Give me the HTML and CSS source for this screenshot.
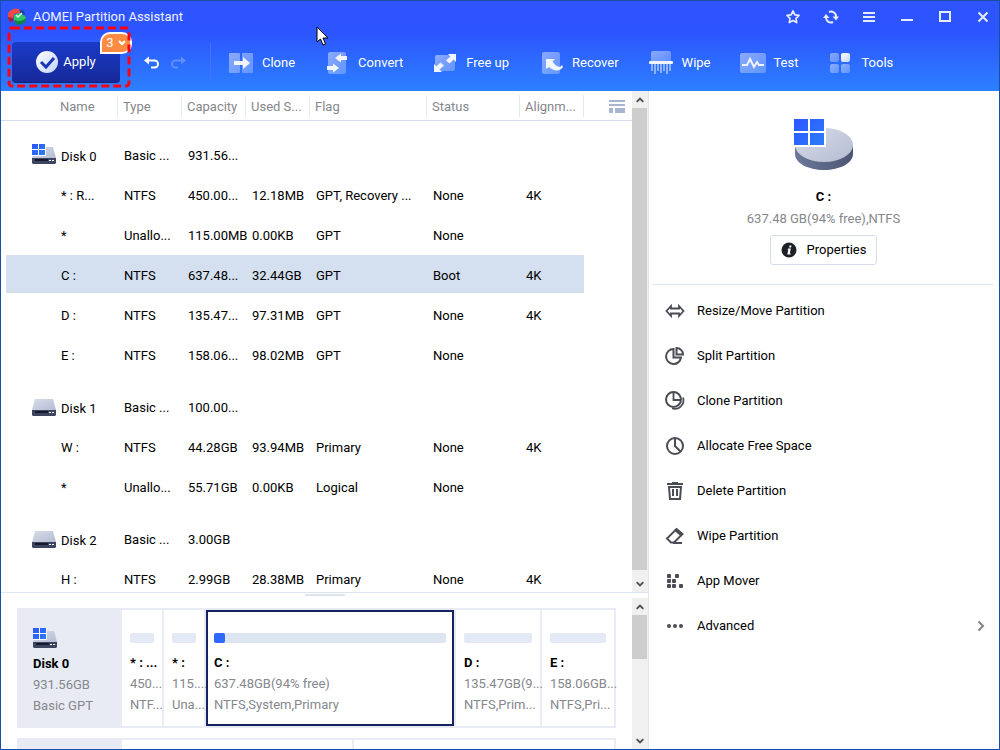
FILE: index.html
```
<!DOCTYPE html>
<html lang="en">
<head>
    <meta charset="UTF-8">
    <meta name="viewport" content="width=device-width, initial-scale=1.0">
    <title>AOMEI Partition Assistant</title>
    <link rel="stylesheet" href="styles.css">
</head>
<body>
    <!-- shared icons -->
    <svg class="defs" width="0" height="0" aria-hidden="true">
        <defs>
            <linearGradient id="tile" x1="0" y1="0" x2="1" y2="1">
                <stop offset="0" stop-color="#fff" stop-opacity=".45"/>
                <stop offset="1" stop-color="#fff" stop-opacity=".25"/>
            </linearGradient>
            <linearGradient id="shine" x1="0" y1="0" x2="1" y2="1">
                <stop offset="0" stop-color="#fff"/>
                <stop offset="1" stop-color="#c3d3fb"/>
            </linearGradient>
            <linearGradient id="metal" x1="0" y1="0" x2="1" y2="1">
                <stop offset="0" stop-color="#d9dde9"/>
                <stop offset="1" stop-color="#b4bcd2"/>
            </linearGradient>
            <linearGradient id="rim" x1="0" y1="0" x2="1" y2="0">
                <stop offset="0" stop-color="#6c7899"/>
                <stop offset="1" stop-color="#4c5674"/>
            </linearGradient>
            <linearGradient id="win" gradientUnits="userSpaceOnUse" x1="0" y1="0" x2="30" y2="26">
                <stop offset="0" stop-color="#2e55ff"/>
                <stop offset="1" stop-color="#2b7dfb"/>
            </linearGradient>
            <linearGradient id="winSmall" gradientUnits="userSpaceOnUse" x1="0" y1="0" x2="13" y2="11">
                <stop offset="0" stop-color="#2e55ff"/>
                <stop offset="1" stop-color="#2b7dfb"/>
            </linearGradient>
        </defs>
        <symbol id="disk" viewBox="0 0 24 20">
            <path d="M3 3h18l3 11H0z" fill="url(#metal)"/>
            <path d="M0 14h24v5l-1 1H1l-1-1z" fill="#3d4560"/>
            <path d="M3 15h13v2H3z" fill="#141a2c"/>
            <path d="M17 16h2v1h-2zM20 16h2v1h-2z" fill="#fff"/>
        </symbol>
        <symbol id="disk-system" viewBox="0 0 24 20">
            <path d="M3 3h18l3 11H0z" fill="url(#metal)"/>
            <path d="M0 14h24v5l-1 1H1l-1-1z" fill="#3d4560"/>
            <path d="M3 15h13v2H3z" fill="#141a2c"/>
            <path d="M17 16h2v1h-2zM20 16h2v1h-2z" fill="#fff"/>
            <path d="M0 0h14v12H0z" fill="#fff"/>
            <path d="M0 0h6v5H0zM7 0h6v5H7zM0 6h6v5H0zM7 6h6v5H7z" fill="url(#winSmall)"/>
        </symbol>
        <symbol id="arrow-up" viewBox="0 0 8 6">
            <path d="M.7 4.800L4 1.500l3.300 3.300" fill="none" stroke="#505050" stroke-width="1.900"/>
        </symbol>
        <symbol id="arrow-down" viewBox="0 0 8 6">
            <path d="M.7 1.200L4 4.500l3.300-3.300" fill="none" stroke="#505050" stroke-width="1.900"/>
        </symbol>
    </svg>

    <div class="window">
        <header>
            <div class="title-bar">
                <svg class="logo" width="20" height="18" viewBox="0 0 20 18">
                    <path d="M1 6C2 2 7 0 12 1l1 4-6 1-1 5-5-1z" fill="#f04b3e"/>
                    <path d="M1 9l5 1v4l-4-1z" fill="#a91f2b"/>
                    <path d="M13 2c3 0 5 2 5 4l-4 2z" fill="#1d3f8f"/>
                    <path d="M7 7l6-2 5 3 1 2c0 3-4 5-8 5l-4-3z" fill="#2fc566"/>
                    <path d="M8 12c3 2 8 1 11-2v2c-1 4-7 6-11 4z" fill="#118345"/>
                    <path d="M9 7l2 2 4-4" fill="none" stroke="#d8ffe5" stroke-width="1.500"/>
                </svg>
                <h1>AOMEI Partition Assistant</h1>
                <div class="window-controls">
                    <button aria-label="Favorite"><svg width="16" height="16" viewBox="0 0 16 16"><path d="M8 2l1.900 3.800 4.100.6-3 3 .7 4.200L8 11.600l-3.700 2 .7-4.200-3-3 4.100-.6z" fill="none" stroke="#e6ecff" stroke-width="1.700" stroke-linejoin="round"/></svg></button>
                    <button aria-label="Refresh"><svg width="16" height="16" viewBox="0 0 16 16"><path d="M3 9a5 5 0 0 0 7 4M6 3a5 5 0 0 1 7 5" fill="none" stroke="#e6ecff" stroke-width="2"/><path d="M0 9l3-4 3.500 4zM9.500 7.500h6.500l-3 4z" fill="#e6ecff"/></svg></button>
                    <button aria-label="Menu"><svg width="16" height="16" viewBox="0 0 16 16"><path d="M2 4h12M2 8h12M2 12h12" stroke="#e6ecff" stroke-width="2"/></svg></button>
                    <button aria-label="Minimize"><svg width="16" height="16" viewBox="0 0 16 16"><path d="M2 11h12" stroke="#e6ecff" stroke-width="2"/></svg></button>
                    <button aria-label="Maximize"><svg width="16" height="16" viewBox="0 0 16 16"><path d="M3 3h10v9H3z" fill="none" stroke="#e6ecff" stroke-width="2"/></svg></button>
                    <button aria-label="Close"><svg width="16" height="16" viewBox="0 0 16 16"><path d="M3.500 3.500l9 9M12.500 3.500l-9 9" stroke="#e6ecff" stroke-width="2"/></svg></button>
                </div>
            </div>
            <div class="toolbar">
                <div class="apply-box">
                    <button class="btn-apply">
                        <svg width="22" height="22" viewBox="0 0 22 22"><circle cx="11" cy="11" r="11" fill="url(#shine)"/><path d="M5 11l5 5 8-9" fill="none" stroke="#1a37b3" stroke-width="3"/></svg>
                        <span>Apply</span>
                    </button>
                    <button class="badge">3<svg width="8" height="6" viewBox="0 0 8 6"><path d="M1 1l3 3 3-3" fill="none" stroke="#fff" stroke-width="2"/></svg></button>
                    <svg class="highlight"><rect x="1" y="1" rx="3"/></svg>
                </div>
                <button class="btn-history" aria-label="Undo"><svg width="16" height="14" viewBox="0 0 16 14"><path d="M4 4.500h6.500a3.500 3.500 0 0 1 0 7H7" fill="none" stroke="#fff" stroke-width="2"/><path d="M0 4.500L5 .5v8z" fill="#fff"/></svg></button>
                <button class="btn-history" aria-label="Redo" disabled><svg width="16" height="14" viewBox="0 0 16 14"><path d="M12 4.500H5.500a3.500 3.500 0 0 0 0 7H8" fill="none" stroke="#5f8eff" stroke-width="2"/><path d="M16 4.500L11 .5v8z" fill="#5f8eff"/></svg></button>
                <nav class="tools">
                    <button>
                        <svg width="24" height="24" viewBox="0 0 24 24"><path d="M1 2h9a1 1 0 0 1 1 1v18a1 1 0 0 1-1 1H1a1 1 0 0 1-1-1V3a1 1 0 0 1 1-1zM14 2h9a1 1 0 0 1 1 1v18a1 1 0 0 1-1 1h-9a1 1 0 0 1-1-1V3a1 1 0 0 1 1-1z" fill="url(#tile)"/><path d="M5 10h9V6l7 6-7 6v-4H5z" fill="#f1f5ff"/></svg>
                        <span>Clone</span>
                    </button>
                    <button>
                        <svg width="24" height="24" viewBox="0 0 24 24"><rect x="3" y="1" width="18" height="22" rx="2" fill="url(#tile)"/><path d="M22 5h-6V2.500L10 7l6 4.500V9h6zM2 15h6v-2.500l6 4.500-6 4.500V19H2z" fill="#f1f5ff"/></svg>
                        <span>Convert</span>
                    </button>
                    <button>
                        <svg width="24" height="24" viewBox="0 0 24 24"><rect x="2" y="4" width="20" height="16" rx="2" fill="url(#tile)"/><path d="M23 3v8l-2.500-2.500-4 4-3.500-3 4.500-4L15 3zM1 21v-8l2.500 2.500 4-4 3.500 3-4.500 4L9 21z" fill="#f1f5ff"/></svg>
                        <span>Free up</span>
                    </button>
                    <button>
                        <svg width="24" height="24" viewBox="0 0 24 24"><rect x="3" y="1" width="18" height="22" rx="2" fill="url(#tile)"/><path d="M7 8h9l-2.500 2.500c2 3 5 5.500 7.500 5.500l2-2 1 2c-3 5-10 4-14 0L7 18z" fill="#f1f5ff"/></svg>
                        <span>Recover</span>
                    </button>
                    <button>
                        <svg width="24" height="24" viewBox="0 0 24 24"><path d="M4 0h16a2 2 0 0 1 2 2v8H2V2a2 2 0 0 1 2-2z" fill="url(#tile)"/><path d="M3 13v7M6 13v10M9 13v7M12 13v9M15 13v7M18 13v10M21 13v7" stroke="#fff" stroke-opacity=".45" stroke-width="2"/><rect y="10" width="24" height="3" rx="1" fill="#f1f5ff"/></svg>
                        <span>Wipe</span>
                    </button>
                    <button>
                        <svg class="wide" width="26" height="24" viewBox="0 0 26 24"><rect y="2" width="26" height="20" rx="2" fill="url(#tile)"/><path d="M2 14h5l3-6 4 8 3-5 2 3h5" fill="none" stroke="#f1f5ff" stroke-width="2"/></svg>
                        <span>Test</span>
                    </button>
                    <button>
                        <svg width="24" height="24" viewBox="0 0 24 24"><rect x="2" y="2" width="9" height="9" rx="2" fill="url(#tile)"/><rect x="13" y="2" width="9" height="9" rx="2" fill="url(#shine)"/><rect x="2" y="13" width="9" height="9" rx="2" fill="url(#tile)"/><rect x="13" y="13" width="9" height="9" rx="2" fill="url(#tile)"/></svg>
                        <span>Tools</span>
                    </button>
                </nav>
            </div>
            <svg class="cursor" width="13" height="20" viewBox="0 0 13 20"><path d="M1 1v15l3.500-3 2.500 6 2.500-1-2.500-6H12z" fill="#fff" stroke="#000" stroke-width="1"/></svg>
        </header>

        <main>
            <section class="left">
                <div class="pane list-pane">
                    <div class="pane-content">
                        <table>
                            <colgroup>
                                <col class="col-gutter"><col class="col-name"><col class="col-size"><col class="col-size"><col class="col-size"><col class="col-flag"><col class="col-status"><col class="col-size"><col>
                            </colgroup>
                            <thead>
                                <tr>
                                    <td></td>
                                    <th class="name"><span>Name</span></th>
                                    <th><span>Type</span></th>
                                    <th><span>Capacity</span></th>
                                    <th><span>Used S...</span></th>
                                    <th><span>Flag</span></th>
                                    <th><span>Status</span></th>
                                    <th><span>Alignm...</span></th>
                                    <td class="view-cell"><button aria-label="Columns"><svg width="16" height="13" viewBox="0 0 16 13"><path d="M0 0h16v2H0zM0 4h16v2H0zM0 8h4v5H0zM6 8h10v5H6z" fill="#a7b5d0"/></svg></button></td>
                                </tr>
                            </thead>
                            <tbody>
                                <tr class="disk"><td></td><td class="name"><svg width="24" height="20"><use href="#disk-system"/></svg>Disk 0</td><td>Basic ...</td><td>931.56...</td><td></td><td></td><td></td><td></td><td></td></tr>
                                <tr><td></td><td class="name">* : R...</td><td>NTFS</td><td>450.00...</td><td>12.18MB</td><td>GPT, Recovery ...</td><td>None</td><td>4K</td><td></td></tr>
                                <tr><td></td><td class="name">*</td><td>Unallo...</td><td>115.00MB</td><td>0.00KB</td><td>GPT</td><td>None</td><td></td><td></td></tr>
                                <tr class="selected"><td></td><td class="name">C :</td><td>NTFS</td><td>637.48...</td><td>32.44GB</td><td>GPT</td><td>Boot</td><td>4K</td><td></td></tr>
                                <tr><td></td><td class="name">D :</td><td>NTFS</td><td>135.47...</td><td>97.31MB</td><td>GPT</td><td>None</td><td>4K</td><td></td></tr>
                                <tr><td></td><td class="name">E :</td><td>NTFS</td><td>158.06...</td><td>98.02MB</td><td>GPT</td><td>None</td><td></td><td></td></tr>
                                <tr class="disk"><td></td><td class="name"><svg width="24" height="20"><use href="#disk"/></svg>Disk 1</td><td>Basic ...</td><td>100.00...</td><td></td><td></td><td></td><td></td><td></td></tr>
                                <tr><td></td><td class="name">W :</td><td>NTFS</td><td>44.28GB</td><td>93.94MB</td><td>Primary</td><td>None</td><td>4K</td><td></td></tr>
                                <tr><td></td><td class="name">*</td><td>Unallo...</td><td>55.71GB</td><td>0.00KB</td><td>Logical</td><td>None</td><td></td><td></td></tr>
                                <tr class="disk"><td></td><td class="name"><svg width="24" height="20"><use href="#disk"/></svg>Disk 2</td><td>Basic ...</td><td>3.00GB</td><td></td><td></td><td></td><td></td><td></td></tr>
                                <tr><td></td><td class="name">H :</td><td>NTFS</td><td>2.99GB</td><td>28.38MB</td><td>Primary</td><td>None</td><td>4K</td><td></td></tr>
                            </tbody>
                        </table>
                    </div>
                    <div class="scrollbar">
                        <button aria-label="Scroll up"><svg width="8" height="6"><use href="#arrow-up"/></svg></button>
                        <div class="track"><div class="thumb thumb-list"></div></div>
                        <button aria-label="Scroll down"><svg width="8" height="6"><use href="#arrow-down"/></svg></button>
                    </div>
                </div>

                <div class="splitter"></div>

                <div class="pane map-pane">
                    <div class="pane-content">
                        <div class="disk-map">
                            <div class="disk-head">
                                <svg width="24" height="20"><use href="#disk-system"/></svg>
                                <strong>Disk 0</strong>
                                <p>931.56GB</p>
                                <p>Basic GPT</p>
                            </div>
                            <div class="part part-xs"><div class="bar"></div><strong>* : ...</strong><p>450...</p><p>NTF...</p></div>
                            <div class="part part-xs"><div class="bar"></div><strong>* :</strong><p>115....</p><p>Una...</p></div>
                            <div class="part part-lg active"><div class="bar"><div class="used"></div></div><strong>C :</strong><p>637.48GB(94% free)</p><p>NTFS,System,Primary</p></div>
                            <div class="part part-md"><div class="bar"></div><strong>D :</strong><p>135.47GB(9...</p><p>NTFS,Prim...</p></div>
                            <div class="part part-sm"><div class="bar"></div><strong>E :</strong><p>158.06GB...</p><p>NTFS,Pri...</p></div>
                        </div>
                        <div class="disk-map">
                            <div class="disk-head"></div>
                            <div class="part part-a"></div>
                            <div class="part part-b"></div>
                        </div>
                    </div>
                    <div class="scrollbar">
                        <button aria-label="Scroll up"><svg width="8" height="6"><use href="#arrow-up"/></svg></button>
                        <div class="track"><div class="thumb thumb-map"></div></div>
                        <button aria-label="Scroll down"><svg width="8" height="6"><use href="#arrow-down"/></svg></button>
                    </div>
                </div>
            </section>

            <aside>
                <div class="summary">
                    <svg width="60" height="52" viewBox="0 0 60 52">
                        <path d="M1 27v8c0 9 13 16 29 16s29-7 29-16v-8z" fill="url(#rim)"/>
                        <ellipse cx="30" cy="26" rx="29" ry="17" fill="url(#metal)"/>
                        <path d="M0 0h32v28H0z" fill="#fff"/>
                        <path d="M0 0h14v12H0zM16 0h14v12H16zM0 14h14v12H0zM16 14h14v12H16z" fill="url(#win)"/>
                    </svg>
                    <h2>C :</h2>
                    <p>637.48 GB(94% free),NTFS</p>
                    <button class="btn-properties">
                        <svg width="16" height="16" viewBox="0 0 16 16"><circle cx="8" cy="8" r="7.500" fill="#1d2026"/><path d="M8.500 3.500h2l-.4 2h-2zM7 6.500h2.800l-1 5h1l-.2 1H6.300l1-5h-.6z" fill="#fff"/></svg>
                        <span>Properties</span>
                    </button>
                </div>
                <ul class="actions">
                    <li><button><svg width="20" height="20" viewBox="0 0 20 20"><path d="M6 5L1.500 10 6 15v-2.500h8V15l4.500-5L14 5v2.500H6z" fill="none" stroke="#4a4d55" stroke-width="1.800"/></svg><span>Resize/Move Partition</span></button></li>
                    <li><button><svg width="20" height="20" viewBox="0 0 20 20"><path d="M8.500 3A7.500 7.500 0 1 0 16 11.500H8.500z" fill="none" stroke="#4a4d55" stroke-width="2"/><path d="M11.500 2v6.500H18A6.500 6.500 0 0 0 11.500 2z" fill="none" stroke="#4a4d55" stroke-width="2"/></svg><span>Split Partition</span></button></li>
                    <li><button><svg width="20" height="20" viewBox="0 0 20 20"><circle cx="8.500" cy="8.500" r="7.500" fill="none" stroke="#4a4d55" stroke-width="2"/><path d="M8.500 1v8H16M18 6.500c2 6-3 13-11 11" fill="none" stroke="#4a4d55" stroke-width="1.800"/></svg><span>Clone Partition</span></button></li>
                    <li><button><svg width="20" height="20" viewBox="0 0 20 20"><circle cx="10" cy="10" r="8" fill="none" stroke="#4a4d55" stroke-width="2"/><path d="M10 2v8l5.500 5.500" fill="none" stroke="#4a4d55" stroke-width="2"/></svg><span>Allocate Free Space</span></button></li>
                    <li><button><svg width="20" height="20" viewBox="0 0 20 20"><path d="M2 3h16M7 2h6M4 6l1 12h10l1-12zM8 8v6h1M12 8v6h-1" fill="none" stroke="#4a4d55" stroke-width="2"/></svg><span>Delete Partition</span></button></li>
                    <li><button><svg width="20" height="20" viewBox="0 0 20 20"><path d="M2 12.500L11.500 3l6 5-8.500 8.500H6zM8 17h9" fill="none" stroke="#4a4d55" stroke-width="1.900"/><path d="M11.500 2l7 6-2.500 2.500-7-6z" fill="#4a4d55"/></svg><span>Wipe Partition</span></button></li>
                    <li><button><svg width="20" height="20" viewBox="0 0 20 20"><g fill="#4a4d55"><rect x="2" y="3" width="4" height="4" rx="1"/><rect x="10" y="3" width="4" height="4" rx="1"/><rect x="2" y="8" width="4" height="4" rx="1"/><rect x="7" y="8" width="4" height="4" rx="1"/><rect x="2" y="13" width="4" height="4" rx="1"/><rect x="7" y="13" width="4" height="4" rx="1"/><rect x="14" y="13" width="4" height="4" rx="1"/></g></svg><span>App Mover</span></button></li>
                    <li><button><svg width="20" height="20" viewBox="0 0 20 20"><g fill="#4a4d55"><circle cx="4" cy="10" r="2"/><circle cx="10" cy="10" r="2"/><circle cx="16" cy="10" r="2"/></g></svg><span>Advanced</span><svg class="chevron" width="8" height="12" viewBox="0 0 8 12"><path d="M1.500 1.500L6 6l-4.500 4.500" fill="none" stroke="#808389" stroke-width="2"/></svg></button></li>
                </ul>
            </aside>
        </main>
    </div>
</body>
</html>
```
FILE: styles.css
```
* {
    box-sizing: border-box;
}

body, h1, h2, p, ul {
    margin: 0;
    padding: 0;
}

body {
    font-family: Roboto, "Liberation Sans", sans-serif;
    font-size: 13px;
    line-height: 20px;
    color: #000;
    overflow: hidden;
}

button {
    font: inherit;
    color: inherit;
    background: none;
    border: none;
    padding: 0;
    cursor: pointer;
}

svg {
    display: block;
    flex-shrink: 0;
}

.defs {
    position: absolute;
}

.window {
    display: flex;
    flex-direction: column;
    height: 100vh;
    border: 1px solid #174fa8;
    background: #fff;
}

/* header */

header {
    position: relative;
    height: 90px;
    flex-shrink: 0;
    color: #fff;
    background: linear-gradient(#2e54ff, #2d55ff 35%, #2c80ff);
}

.title-bar {
    display: flex;
    align-items: center;
    height: 31px;
    padding: 0 1px 0 6px;
}

.logo {
    margin-right: 6px;
}

.title-bar h1 {
    font-size: 13px;
    font-weight: 400;
    color: #eef2ff;
}

.window-controls {
    display: flex;
    gap: 8px;
    margin-left: auto;
}

.window-controls button {
    display: flex;
    justify-content: center;
    width: 30px;
}

.toolbar {
    display: flex;
    align-items: center;
    height: 61px;
    padding-left: 11px;
}

.apply-box {
    position: relative;
    margin-right: 20px;
}

.btn-apply {
    display: flex;
    align-items: center;
    justify-content: center;
    gap: 5px;
    width: 108px;
    height: 41px;
    border-radius: 4px;
    border-bottom: 1px solid #10237c;
    background: linear-gradient(#1a3bc8, #17299a);
}

.badge {
    position: absolute;
    top: -10px;
    left: 88px;
    display: flex;
    align-items: center;
    justify-content: center;
    gap: 4px;
    width: 32px;
    height: 22px;
    border: 2px solid #fff;
    border-radius: 10px 10px 10px 0;
    background: #ff8b42;
}

.highlight {
    position: absolute;
    top: -15px;
    left: -4px;
    width: 124px;
    height: 63px;
    overflow: visible;
    pointer-events: none;
}

.highlight rect {
    width: 120px;
    height: 58px;
    fill: none;
    stroke: #ff0012;
    stroke-width: 3;
    stroke-dasharray: 8 4;
}

.btn-history {
    margin-left: 4px;
    margin-right: 6px;
}

.tools {
    display: flex;
    align-items: center;
    gap: 30px;
    height: 40px;
    margin-left: 18px;
    padding-left: 18px;
    border-left: 1px solid #4a6fff;
}

.tools button {
    display: flex;
    align-items: center;
    gap: 9px;
}

.tools .wide {
    margin-right: -2px;
}

.cursor {
    position: absolute;
    top: 25px;
    left: 315px;
}

/* layout */

main {
    display: flex;
    flex: 1;
    min-height: 0;
}

.left {
    display: flex;
    flex-direction: column;
    flex: 1;
    min-width: 0;
    border-right: 1px solid #dde5f2;
}

.pane {
    display: flex;
    min-height: 0;
}

.pane-content {
    flex: 1;
    min-width: 0;
    overflow: hidden;
}

.list-pane {
    flex: 1;
    border-bottom: 1px solid #dde5f2;
}

.map-pane {
    flex: 0 0 151px;
}

.splitter {
    width: 40px;
    height: 2px;
    margin: 1px auto 2px;
    background: #dde5f2;
}

/* partition table */

table {
    width: 100%;
    table-layout: fixed;
    border-collapse: separate;
    border-spacing: 0;
    white-space: nowrap;
}

.col-gutter {
    width: 5px;
}

.col-name {
    width: 112px;
}

.col-size {
    width: 64px;
}

.col-flag {
    width: 117px;
}

.col-status {
    width: 93px;
}

thead th,
thead td {
    height: 30px;
    padding: 0;
    border-bottom: 1px solid #d5dcec;
    color: #85878d;
    font-weight: 400;
    text-align: left;
}

thead th span {
    display: block;
    height: 22px;
    padding-left: 5px;
    border-right: 1px solid #e4e8f1;
    line-height: 24px;
}

thead .name span {
    padding-left: 54px;
}

.view-cell button {
    display: block;
    margin: 1px 7px 0 auto;
}

tbody td {
    height: 40px;
    padding: 2px 0 0 6px;
}

tbody td:first-child {
    padding: 0;
}

tbody .name {
    padding-left: 55px;
}

.disk td {
    height: 52px;
    padding-top: 14px;
}

.disk:first-child td {
    height: 54px;
    padding-top: 16px;
}

.disk .name {
    padding-left: 26px;
}

.disk .name svg {
    display: inline-block;
    margin: -2px 5px 0 0;
    vertical-align: -3px;
}

.selected td:not(:first-child):not(:last-child) {
    background: linear-gradient(#d4dfef, #d4dfef) no-repeat;
    background-size: 100% 38px;
}

/* scrollbars */

.scrollbar {
    display: flex;
    flex-direction: column;
    width: 16px;
    flex-shrink: 0;
    background: #f0f0f0;
}

.scrollbar button {
    display: flex;
    align-items: center;
    justify-content: center;
    height: 17px;
    flex-shrink: 0;
}

.track {
    flex: 1;
}

.thumb {
    width: 15px;
    background: #cdcdcd;
}

.thumb-list {
    height: 99%;
}

.thumb-map {
    height: 44px;
}

/* disk map */

.map-pane .pane-content {
    padding: 10px 16px 0;
}

.disk-map {
    display: flex;
    gap: 2px;
    height: 120px;
    margin-bottom: 10px;
    padding: 2px;
    background: #e8ebf3;
    white-space: nowrap;
}

.disk-head {
    width: 101px;
    flex-shrink: 0;
    padding: 18px 0 0 14px;
}

.disk-head svg {
    margin-bottom: 5px;
}

.disk-map strong,
.disk-map p {
    display: block;
    line-height: 21px;
}

.disk-map p {
    color: #85878d;
}

.part {
    flex-basis: 0;
    min-width: 0;
    padding: 23px 0 0 8px;
    background: #fff;
}

/* grow values leave out the 8px side padding */
.part-xs {
    flex-grow: 32;
}

.part-sm {
    flex-grow: 64;
}

.part-md {
    flex-grow: 76;
}

.part-lg {
    flex-grow: 238;
}

.part-a {
    flex-grow: 222;
}

.part-b {
    flex-grow: 252;
}

.part.active {
    padding: 21px 0 0 6px;
    border: 2px solid #14235f;
}

.bar {
    height: 10px;
    margin: 0 8px 9px 0;
    border-radius: 2px;
    background: #e3e9f5;
}

.active .bar {
    margin-right: 6px;
    background: #dde5f1;
}

.used {
    width: 11px;
    height: 10px;
    border-radius: 2px;
    background: #2e68ff;
}

/* right side */

aside {
    width: 350px;
    flex-shrink: 0;
    padding: 0 5px 0 4px;
}

.summary {
    display: flex;
    flex-direction: column;
    align-items: center;
    padding: 28px 0 19px;
    border-bottom: 1px solid #dde5f2;
}

.summary h2 {
    margin-top: 15px;
    font-size: 13px;
    line-height: 22px;
}

.summary p {
    line-height: 22px;
    color: #85878d;
}

.btn-properties {
    display: flex;
    align-items: center;
    gap: 10px;
    height: 30px;
    margin-top: 5px;
    padding: 0 10px;
    border: 1px solid #d5dcec;
    border-radius: 3px;
}

.actions {
    list-style: none;
    padding-top: 3px;
}

.actions button {
    display: flex;
    align-items: center;
    gap: 12px;
    width: 100%;
    height: 45px;
    padding: 0 9px 0 12px;
}

.chevron {
    margin-left: auto;
}
```
